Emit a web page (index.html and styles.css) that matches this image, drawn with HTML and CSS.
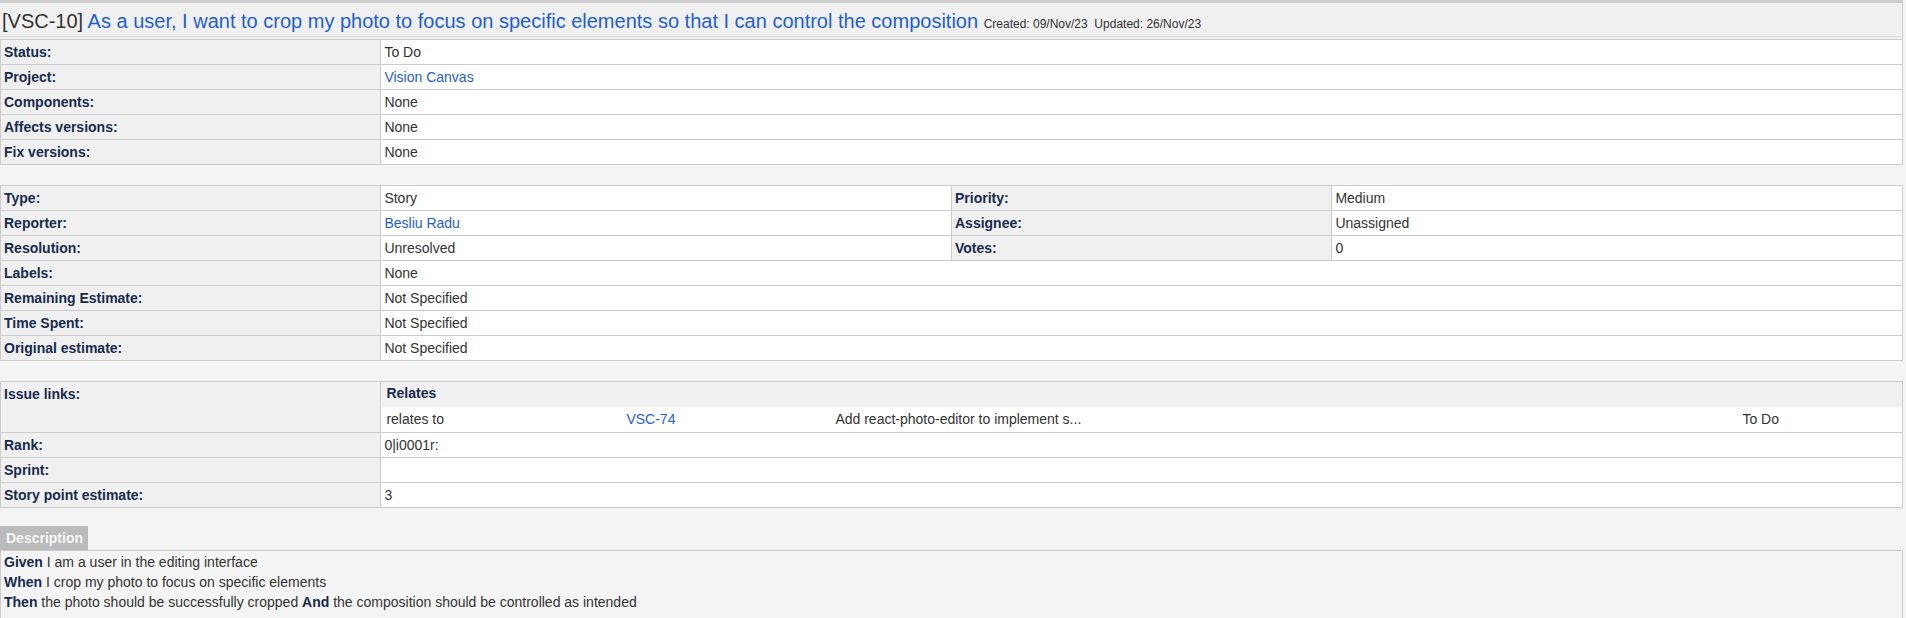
FILE: index.html
```html
<!DOCTYPE html>
<html lang="en">
<head>
<meta charset="utf-8">
<title>[VSC-10] As a user, I want to crop my photo</title>
<link rel="stylesheet" href="styles.css">
</head>
<body>
<div class="page">
  <div class="issue-header">
    <h3 class="formtitle"><span class="key">[VSC-10]</span> <a class="title-link" href="#">As a user, I want to crop my photo to focus on specific elements so that I can control the composition</a> <span class="subtext">Created: 09/Nov/23&nbsp; Updated: 26/Nov/23</span></h3>
  </div>

  <table class="grid">
    <colgroup><col class="c-label"><col class="c-wide"></colgroup>
    <tr><td class="label">Status:</td><td>To Do</td></tr>
    <tr><td class="label">Project:</td><td><a href="#">Vision Canvas</a></td></tr>
    <tr><td class="label">Components:</td><td>None</td></tr>
    <tr><td class="label">Affects versions:</td><td>None</td></tr>
    <tr><td class="label">Fix versions:</td><td>None</td></tr>
  </table>

  <table class="grid spaced">
    <colgroup><col class="c-label"><col class="c-value"><col class="c-label"><col class="c-value"></colgroup>
    <tr><td class="label">Type:</td><td>Story</td><td class="label">Priority:</td><td>Medium</td></tr>
    <tr><td class="label">Reporter:</td><td><a href="#">Besliu Radu</a></td><td class="label">Assignee:</td><td>Unassigned</td></tr>
    <tr><td class="label">Resolution:</td><td>Unresolved</td><td class="label">Votes:</td><td>0</td></tr>
    <tr><td class="label">Labels:</td><td colspan="3">None</td></tr>
    <tr><td class="label">Remaining Estimate:</td><td colspan="3">Not Specified</td></tr>
    <tr><td class="label">Time Spent:</td><td colspan="3">Not Specified</td></tr>
    <tr><td class="label">Original estimate:</td><td colspan="3">Not Specified</td></tr>
  </table>

  <table class="grid spaced">
    <colgroup><col class="c-label"><col class="c-wide"></colgroup>
    <tr>
      <td class="label">Issue links:</td>
      <td class="nested">
        <table class="links">
          <colgroup><col class="l-type"><col class="l-key"><col class="l-summary"><col class="l-status"></colgroup>
          <tr><td class="links-head" colspan="4">Relates</td></tr>
          <tr><td>relates to</td><td><a href="#">VSC-74</a></td><td>Add react-photo-editor to implement s...</td><td>To Do</td></tr>
        </table>
      </td>
    </tr>
    <tr><td class="label">Rank:</td><td>0|i0001r:</td></tr>
    <tr><td class="label">Sprint:</td><td></td></tr>
    <tr><td class="label">Story point estimate:</td><td>3</td></tr>
  </table>

  <div class="desc-tab">Description</div>
  <div class="desc-box">
    <p><b>Given</b> I am a user in the editing interface<br>
    <b>When</b> I crop my photo to focus on specific elements<br>
    <b>Then</b> the photo should be successfully cropped <b>And</b> the composition should be controlled as intended</p>
  </div>
</div>
</body>
</html>
```

FILE: styles.css
```css
html, body {
  margin: 0;
  padding: 0;
  background: #f4f4f4;
}

body {
  font-family: "Liberation Sans", Arial, sans-serif;
  font-size: 14px;
  color: #333333;
}

a {
  color: #1f5fd0;
  text-decoration: none;
}

.page {
  padding: 0 3px 0 0;
}

.issue-header {
  background: #f0f0f0;
  border-top: 3px solid #cccccc;
  border-right: 1px solid #cccccc;
  padding: 0 1px 2px 0;
}

.formtitle {
  margin: 0;
  padding: 7px 2px 3px 2px;
  border-bottom: 1px solid #dddddd;
  font-size: 20px;
  line-height: 23px;
  height: 23px;
  font-weight: normal;
  color: #333333;
  white-space: nowrap;
}

.formtitle .key {
  color: #333333;
}

.formtitle .title-link {
  color: #1f5fd0;
}

.formtitle .subtext {
  font-size: 12px;
  line-height: 12px;
  color: #333333;
}

table.grid {
  width: 100%;
  border-collapse: collapse;
  table-layout: fixed;
  background: #ffffff;
}

table.spaced {
  margin-top: 20px;
}

.c-label { width: 20%; }
.c-wide { width: 80%; }
.c-value { width: 30%; }

.grid td {
  border: 1px solid #cccccc;
  padding: 4px 3px;
  line-height: 16px;
  height: 16px;
  vertical-align: top;
  text-align: left;
  color: #333333;
}

.grid td.label {
  background: #f0f0f0;
  font-weight: bold;
  color: #172b4d;
}

.grid td.nested {
  padding: 0;
}

table.links {
  width: 100%;
  border-collapse: collapse;
  table-layout: fixed;
}

.l-type { width: 240px; }
.l-key { width: 209px; }
.l-summary { width: 907px; }
.l-status { width: auto; }

.links td {
  border: none;
  padding: 4px 5px 5px 5px;
  line-height: 16px;
  color: #333333;
  white-space: nowrap;
}

.links td.links-head {
  background: #f0f0f0;
  font-weight: bold;
  color: #172b4d;
  padding: 3px 5px 6px 5px;
}

.desc-tab {
  display: inline-block;
  margin-top: 18px;
  background: #bbbbbb;
  color: #f7f7f7;
  font-weight: bold;
  line-height: 16px;
  padding: 4px 5px 4px 6px;
  vertical-align: top;
}

.desc-box {
  border: 1px solid #cccccc;
  padding: 1px 3px 2px 3px;
  min-height: 100px;
}

.desc-box p {
  margin: 0;
  line-height: 20px;
  color: #333333;
}

.desc-box b {
  color: #172b4d;
}
```
